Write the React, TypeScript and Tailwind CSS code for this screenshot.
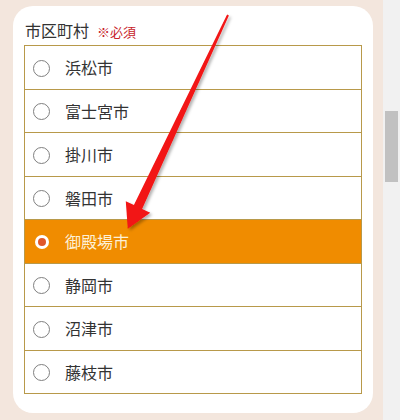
import React from "react";

const cities = ["浜松市", "富士宮市", "掛川市", "磐田市", "御殿場市", "静岡市", "沼津市", "藤枝市"];
const selected = "御殿場市";

const Radio: React.FC<{ checked: boolean }> = ({ checked }) =>
	checked ? (
		<span className="flex items-center justify-center w-[16px] h-[16px]">
			<span className="flex items-center justify-center w-[14px] h-[14px] rounded-full bg-white">
				<span className="w-[8px] h-[8px] rounded-full bg-[#e0582a]" />
			</span>
		</span>
	) : (
		<span className="block w-[17px] h-[17px] rounded-full border border-[#808080] bg-white" />
	);

const Arrow: React.FC = () => (
	<svg className="absolute left-0 top-0 pointer-events-none" width="400" height="420" viewBox="0 0 400 420">
		<defs>
			<filter id="shadow" x="-20%" y="-20%" width="140%" height="140%">
				<feDropShadow dx="2" dy="2" stdDeviation="1.5" floodColor="#000" floodOpacity="0.3" />
			</filter>
		</defs>
		<polygon
			points="227.1,14.6 133.9,205.1 125.8,201.3 127.8,228.7 150.2,212.7 142.1,208.9 228.9,15.4"
			fill="#f21414"
			filter="url(#shadow)"
		/>
	</svg>
);

export default function App() {
	return (
		<div
			className="relative flex w-[400px] h-[420px] overflow-hidden"
			style={{ fontFamily: '"Noto Sans CJK JP", "Noto Sans", sans-serif' }}
		>
			<div className="w-[383px] h-full bg-[#f3e6dd] pl-[13px] pt-[6px]">
				<div className="w-[360px] h-[407px] bg-white rounded-[20px] px-[11px] pt-[13px]">
					<div className="flex items-baseline h-[22px] overflow-hidden text-[#333] mb-[4px] pl-[1px]">
						<span className="text-[16px] leading-[22px]">市区町村</span>
						<span className="text-[13px] leading-[20px] text-[#c8242b] ml-[8px]">※必須</span>
					</div>
					<div className="border-t border-x border-[#b8994a]">
						{cities.map((c) => {
							const on = c === selected;
							return (
								<div
									key={c}
									className={`flex items-center h-[43.5px] border-b border-[#b8994a] ${
										on ? "bg-[#f08c00] text-[#fdf0d6]" : "bg-white text-[#333]"
									}`}
								>
									<span className="ml-[8px] mt-[2px] flex items-center justify-center w-[17px]">
										<Radio checked={on} />
									</span>
									<span className="ml-[15px] text-[16px] leading-[22px]">{c}</span>
								</div>
							);
						})}
					</div>
				</div>
			</div>
			<div className="w-[17px] h-full bg-[#f1f1f1]">
				<div className="mt-[111px] mx-[2px] h-[71px] bg-[#c1c1c1]" />
			</div>
			<Arrow />
		</div>
	);
}
